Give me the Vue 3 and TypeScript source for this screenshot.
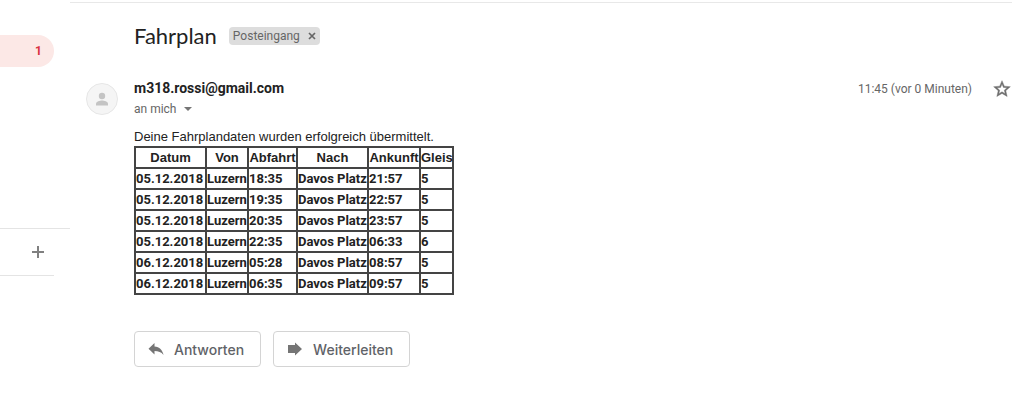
<script setup lang="ts">
interface Connection {
  date: string
  from: string
  departure: string
  to: string
  arrival: string
  track: string
}

const headers: string[] = ['Datum', 'Von', 'Abfahrt', 'Nach', 'Ankunft', 'Gleis']

const connections: Connection[] = [
  { date: '05.12.2018', from: 'Luzern', departure: '18:35', to: 'Davos Platz', arrival: '21:57', track: '5' },
  { date: '05.12.2018', from: 'Luzern', departure: '19:35', to: 'Davos Platz', arrival: '22:57', track: '5' },
  { date: '05.12.2018', from: 'Luzern', departure: '20:35', to: 'Davos Platz', arrival: '23:57', track: '5' },
  { date: '05.12.2018', from: 'Luzern', departure: '22:35', to: 'Davos Platz', arrival: '06:33', track: '6' },
  { date: '06.12.2018', from: 'Luzern', departure: '05:28', to: 'Davos Platz', arrival: '08:57', track: '5' },
  { date: '06.12.2018', from: 'Luzern', departure: '06:35', to: 'Davos Platz', arrival: '09:57', track: '5' },
]
</script>

<template>
  <div class="page">
    <aside class="sidebar">
      <a class="inbox" href="#inbox">1</a>
      <div class="chat">
        <button class="add" type="button" aria-label="Neuer Chat">
          <svg width="14" height="14" viewBox="0 0 14 14"><path d="M7 1v12M1 7h12" stroke="#808080" stroke-width="2" /></svg>
        </button>
      </div>
    </aside>

    <main class="mail">
      <header class="subject">
        <h1>Fahrplan</h1>
        <span class="label">
          Posteingang
          <button class="remove" type="button" aria-label="Label entfernen">
            <svg width="8" height="8" viewBox="0 0 8 8"><path d="M1 1l6 6M7 1L1 7" stroke="#666" stroke-width="1.7" /></svg>
          </button>
        </span>
      </header>

      <div class="sender">
        <div class="avatar">
          <svg width="32" height="32" viewBox="0 0 32 32">
            <circle cx="16" cy="16" r="15.5" fill="#f5f5f5" stroke="#e6e6e6" />
            <circle cx="16" cy="13" r="3.2" fill="#c4c4c4" />
            <path d="M10 22.500v-1.800c0-2.200 4-3.200 6-3.200s6 1 6 3.200v1.800z" fill="#c4c4c4" />
          </svg>
        </div>
        <div class="who">
          <div class="address">m318.rossi@gmail.com</div>
          <button class="recipient" type="button">
            an mich
            <svg width="8" height="4" viewBox="0 0 8 4"><path d="M0 0h8L4 4z" fill="#757575" /></svg>
          </button>
        </div>
        <div class="time">11:45 (vor 0 Minuten)</div>
        <button class="star" type="button" aria-label="Markieren">
          <svg width="20" height="20" viewBox="0 0 24 24">
            <path d="M22 9.240l-7.190-.620L12 2 9.190 8.630 2 9.240l5.460 4.730L5.820 21 12 17.270 18.180 21l-1.630-7.030L22 9.240zM12 15.400l-3.760 2.270 1-4.280-3.320-2.880 4.380-.380L12 6.100l1.710 4.040 4.380.380-3.320 2.880 1 4.280L12 15.400z" fill="#6e6e6e" stroke="#6e6e6e" stroke-width=".5" />
          </svg>
        </button>
      </div>

      <section class="content">
        <p>Deine Fahrplandaten wurden erfolgreich übermittelt.</p>
        <table>
          <colgroup>
            <col class="date">
            <col class="from">
            <col class="departure">
            <col class="to">
            <col class="arrival">
            <col class="track">
          </colgroup>
          <thead>
            <tr><th v-for="h in headers" :key="h" scope="col">{{ h }}</th></tr>
          </thead>
          <tbody>
            <tr v-for="c in connections" :key="c.date + c.departure">
              <td>{{ c.date }}</td>
              <td>{{ c.from }}</td>
              <td>{{ c.departure }}</td>
              <td>{{ c.to }}</td>
              <td>{{ c.arrival }}</td>
              <td>{{ c.track }}</td>
            </tr>
          </tbody>
        </table>
      </section>

      <div class="actions">
        <button type="button">
          <svg width="16" height="14" viewBox="0 0 16 14"><path d="M6.500 1v3.500c5 .5 8 3.500 9 8.500-2.200-3-5-4-9-4v3.500L.5 6.700z" fill="#757575" /></svg>
          Antworten
        </button>
        <button type="button">
          <svg width="16" height="14" viewBox="0 0 16 14"><path d="M1 3h7V.5L15 7l-7 6.500V11H1z" fill="#757575" /></svg>
          Weiterleiten
        </button>
      </div>
    </main>
  </div>
</template>

<style>
body {
  margin: 0;
  background: #fff;
}
</style>

<style scoped>
.page {
  display: grid;
  grid-template-columns: 70px 1fr;
  min-height: 100vh;
  font-family: Roboto, "Liberation Sans", sans-serif;
  color: #222;
}

button {
  font: inherit;
  color: inherit;
  background: none;
  border: 0;
  padding: 0;
}

svg {
  display: block;
  flex: none;
}

.sidebar {
  padding-top: 35px;
}

.inbox {
  display: block;
  box-sizing: border-box;
  width: 54px;
  height: 32px;
  padding-right: 12px;
  border-radius: 0 16px 16px 0;
  background: #fce8e6;
  color: #d93040;
  font-size: 12px;
  font-weight: 700;
  line-height: 32px;
  text-align: right;
  text-decoration: none;
}

.chat {
  margin-top: 161px;
  border-top: 1px solid #e4e4e4;
}

.add {
  display: flex;
  align-items: center;
  justify-content: flex-end;
  width: 54px;
  height: 47px;
  padding-right: 9px;
  box-sizing: border-box;
  border-bottom: 1px solid #e4e4e4;
}

.mail {
  margin-top: 2px;
  border-top: 1px solid #e8e8e8;
  padding-left: 64px;
}

.subject {
  display: flex;
  align-items: center;
  gap: 12px;
  padding-top: 20px;
}

h1 {
  margin: 0;
  font-family: Lato, sans-serif;
  font-size: 22px;
  font-weight: 400;
  line-height: 26px;
}

.label {
  display: flex;
  align-items: center;
  gap: 8px;
  height: 18px;
  padding: 0 4px;
  border-radius: 4px;
  background: #ddd;
  color: #666;
  font-size: 12px;
}

.sender {
  display: flex;
  margin: 29px 0 0 -48px;
}

.avatar {
  width: 48px;
  padding-top: 5px;
}

.who {
  flex: 1;
}

.address {
  font-size: 14px;
  font-weight: 700;
  line-height: 20px;
}

.recipient {
  display: flex;
  align-items: center;
  gap: 8px;
  color: #666;
  font-size: 12px;
  line-height: 22px;
}

.time {
  color: #666;
  font-size: 12px;
  line-height: 22px;
}

.star {
  align-self: flex-start;
  margin-left: 20px;
  padding-top: 1px;
}

.content {
  margin-top: 8px;
  font-size: 13px;
}

p {
  margin: 0;
  font-family: "Liberation Sans", sans-serif;
  line-height: 18px;
}

table {
  width: 320px;
  table-layout: fixed;
  border: 2px solid #444;
  border-collapse: collapse;
  font-weight: 700;
  white-space: nowrap;
}

.date,
.to {
  width: 71px;
}

.from {
  width: 42px;
}

.departure {
  width: 49px;
}

.arrival {
  width: 52px;
}

th,
td {
  border: 2px solid #444;
  padding: 1px 0;
  line-height: 17px;
}

th {
  font-family: "Liberation Sans", sans-serif;
}

.actions {
  display: flex;
  gap: 12px;
  margin-top: 36px;
}

.actions button {
  display: flex;
  align-items: center;
  gap: 10px;
  height: 36px;
  padding: 0 16px 0 13px;
  border: 1px solid #d4d4d4;
  border-radius: 4px;
  color: #5f6368;
  font-family: Inter, sans-serif;
  font-size: 14px;
  font-weight: 500;
}
</style>
